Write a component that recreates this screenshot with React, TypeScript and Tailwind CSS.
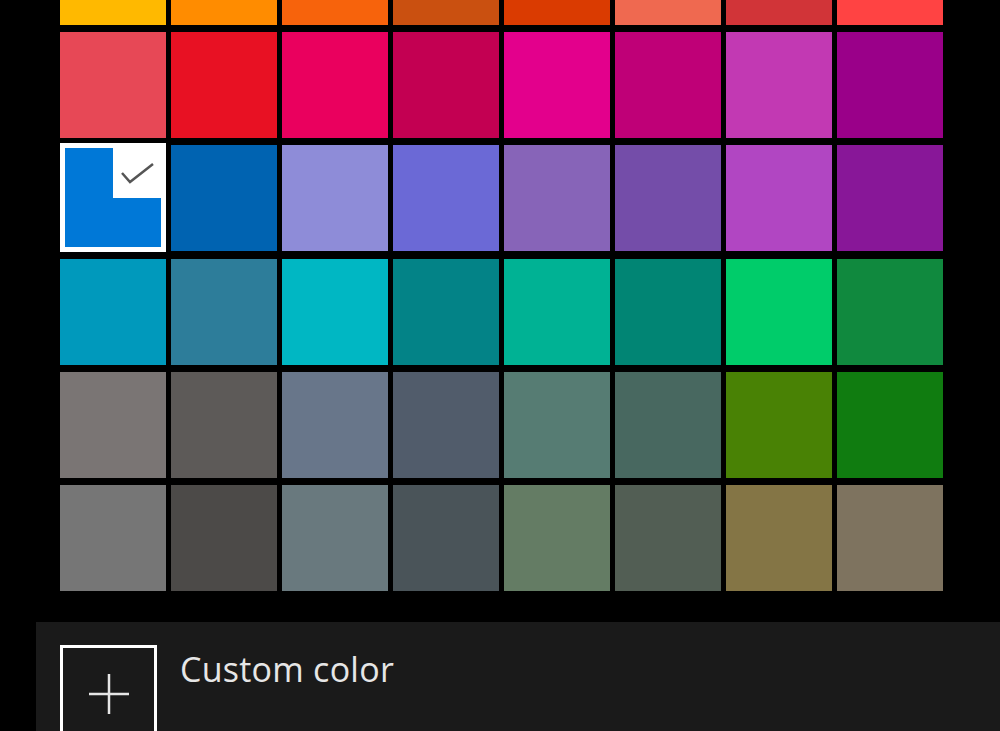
import React from 'react';

// Windows 10 accent palette, row by row
const rows: string[][] = [
  ['#FFB900', '#FF8C00', '#F7630C', '#CA5010', '#DA3B01', '#EF6950', '#D13438', '#FF4343'],
  ['#E74856', '#E81123', '#EA005E', '#C30052', '#E3008C', '#BF0077', '#C239B3', '#9A0089'],
  ['#0078D7', '#0063B1', '#8E8CD8', '#6B69D6', '#8764B8', '#744DA9', '#B146C2', '#881798'],
  ['#0099BC', '#2D7D9A', '#00B7C3', '#038387', '#00B294', '#018574', '#00CC6A', '#10893E'],
  ['#7A7574', '#5D5A58', '#68768A', '#515C6B', '#567C73', '#486860', '#498205', '#107C10'],
  ['#767676', '#4C4A48', '#69797E', '#4A5459', '#647C64', '#525E54', '#847545', '#7E735F'],
];

const selected = '#0078D7';

const Swatch: React.FC<{ color: string }> = ({ color }) => {
  if (color !== selected) {
    return <div className="w-[106px] h-[106px]" style={{ backgroundColor: color }} />;
  }
  return (
    <div className="w-[106px] h-[109px] -mt-[2px] bg-white p-[5px]">
      <div className="relative w-full h-full" style={{ backgroundColor: color }}>
        <div className="absolute top-0 right-0 w-[48px] h-[50px] bg-white">
          <svg width="48" height="50" viewBox="0 0 48 50" className="absolute top-0 left-0">
            <polyline points="9,25 17,34 40,16" fill="none" stroke="#555555" strokeWidth="2.5" />
          </svg>
        </div>
      </div>
    </div>
  );
};

const App: React.FC = () => {
  return (
    <div className="w-[1000px] h-[731px] bg-black overflow-hidden">
      <div className="pl-[60px] mt-[-81px] grid grid-cols-[repeat(8,106px)] gap-x-[5px] gap-y-[7px]">
        {rows.flat().map((c, i) => (
          <Swatch key={i} color={c} />
        ))}
      </div>

      <div className="ml-[36px] mt-[31px] h-[200px] bg-[#1a1a1a] flex items-start pl-[24px] pt-[23px]">
        <div className="w-[97px] h-[97px] border-[3px] border-white flex items-center justify-center">
          <svg width="42" height="42" viewBox="0 0 42 42">
            <line x1="1" y1="21" x2="41" y2="21" stroke="#e6e6e6" strokeWidth="2.5" />
            <line x1="21" y1="1" x2="21" y2="41" stroke="#e6e6e6" strokeWidth="2.5" />
          </svg>
        </div>
        <span
          className="ml-[23px] mt-[7px] text-[34px] leading-none tracking-[0.25px] text-[#e6e6e6]"
          style={{ fontFamily: '"Open Sans", "Noto Sans", sans-serif' }}
        >
          Custom color
        </span>
      </div>
    </div>
  );
};

export default App;
